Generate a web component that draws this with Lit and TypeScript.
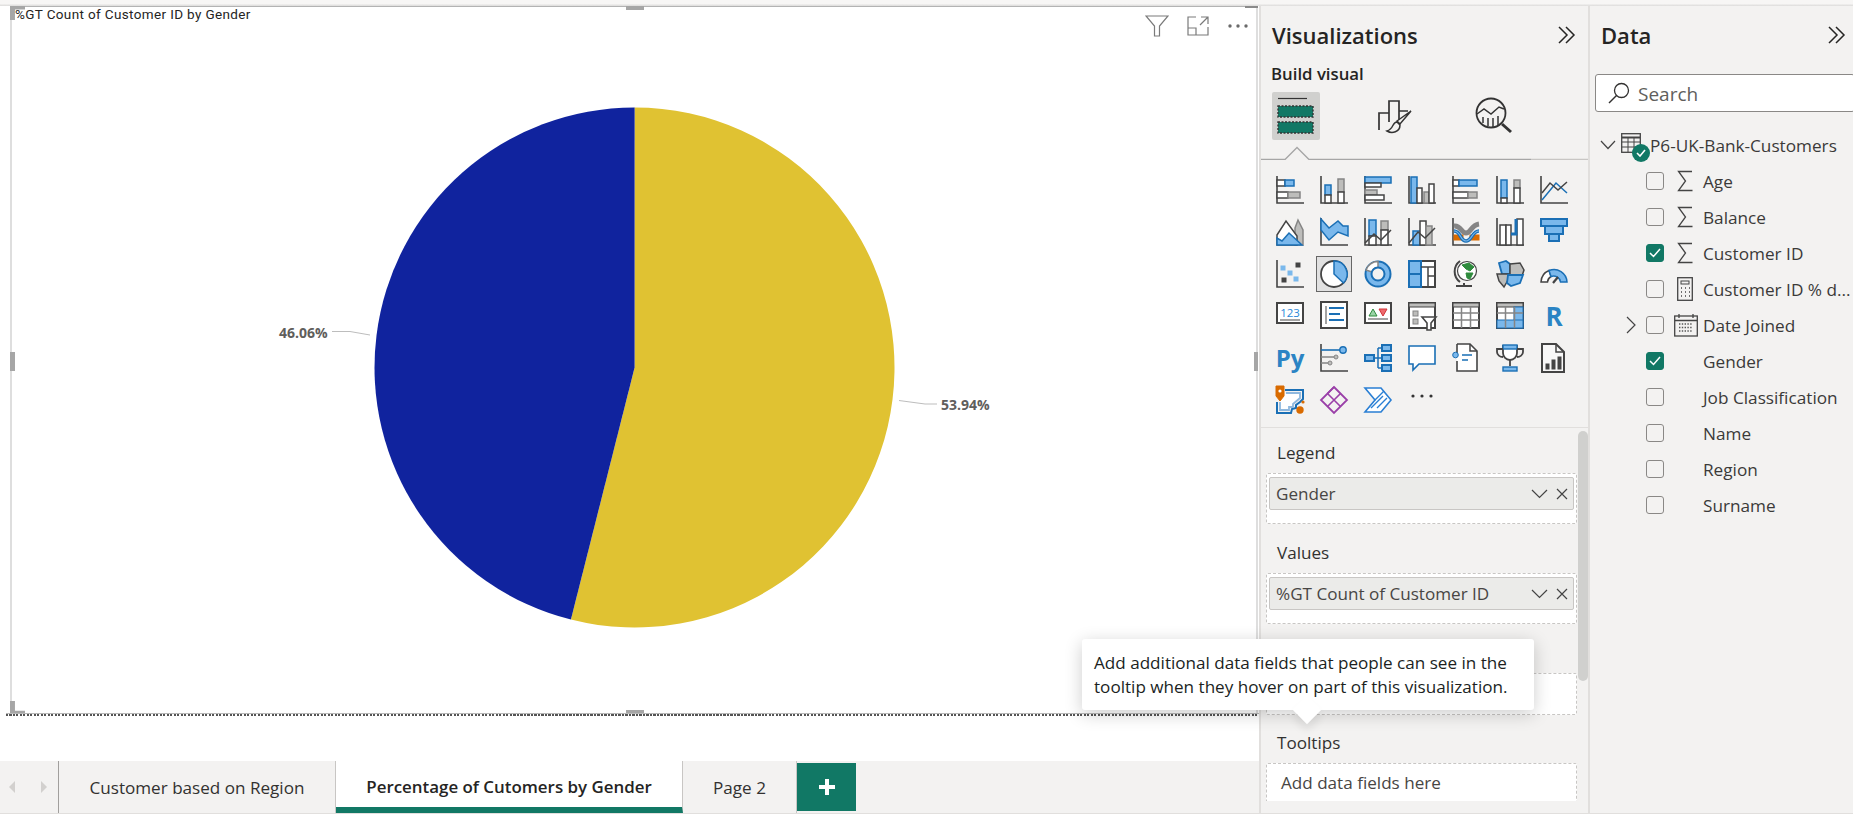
import { LitElement, html, css, svg } from 'lit';
import { customElement } from 'lit/decorators.js';

const D = '#444444';
const B = '#1a6fb5';
const F = '#7ab8ec';
const G = '#bdbdbb';
const K = '#858585';
const W = '#ffffff';
const O = '#d96b00';

const r = (x: number, y: number, w: number, h: number, fill: string, stroke: string, sw = 1.5) =>
  svg`<rect x=${x} y=${y} width=${w} height=${h} fill=${fill} stroke=${stroke} stroke-width=${sw}></rect>`;
const p = (d: string, stroke: string, fill = 'none', sw = 1.5) =>
  svg`<path d=${d} stroke=${stroke} fill=${fill} stroke-width=${sw}></path>`;
const axis = p('M1 0V27H28', D, 'none', 1.6);

const ICONS = [
  // row 1
  svg`${axis}${r(1, 4, 8, 6, W, D)}${r(9, 4, 9, 6, F, B)}${r(1, 16, 11, 6, W, D)}${r(12, 16, 12, 6, G, K)}`,
  svg`${axis}${r(5, 9, 6, 10, F, B)}${r(5, 19, 6, 8, W, D)}${r(18, 3, 6, 13, G, K)}${r(18, 16, 6, 11, W, D)}`,
  svg`${axis}${r(1, 1, 26, 6, F, B)}${r(1, 7, 16, 4, W, D)}${r(1, 14, 12, 5, G, K)}${r(1, 19, 19, 5, W, D)}`,
  svg`${axis}${r(3, 1, 6, 26, F, B)}${r(9, 12, 5, 15, W, D)}${r(16, 16, 5, 11, G, K)}${r(21, 8, 5, 19, W, D)}`,
  svg`${axis}${r(1, 4, 6, 6, W, D)}${r(7, 4, 18, 6, F, B)}${r(1, 16, 15, 6, W, D)}${r(16, 16, 9, 6, G, K)}`,
  svg`${axis}${r(5, 4, 6, 18, F, B)}${r(5, 22, 6, 5, W, D)}${r(18, 4, 6, 8, G, K)}${r(18, 12, 6, 15, W, D)}`,
  svg`${axis}${p('M2 24L16 7L27 17', B)}${p('M2 17L10 7L18 14L27 6', D)}`,
  // row 2
  svg`${p('M19 10L22 2L27 12V27H19Z', K, G)}${p('M1 17L10 3L21 18V27H1Z', D, W)}${p('M1 27V20L6 23L13 15L26 27Z', B, F)}`,
  svg`${axis}${p('M1 1L9 10L18 3L23 8H28V18L18 14L9 22L1 12Z', B, F)}`,
  svg`${axis}${r(5, 2, 7, 16, F, B)}${r(5, 18, 7, 9, W, D)}${r(17, 3, 7, 9, G, K)}${r(17, 12, 7, 15, W, D)}${p('M1 25L10 16L17 22L27 12', D)}`,
  svg`${axis}${r(5, 13, 7, 14, F, B)}${r(12, 3, 6, 24, W, D)}${r(18, 8, 6, 19, G, K)}${p('M1 25L10 14L17 20L27 10', D)}`,
  svg`${axis}${p('M2 8C9 7 9 15 14 15S19 7 27 6', K, 'none', 5)}${r(2, 17, 9, 5, O, O, 1)}${r(18, 17, 9, 5, O, O, 1)}${p('M2 13C9 13 8 23 14 23S20 13 27 13', B, 'none', 3.5)}${p('M2 13C9 13 8 23 14 23S20 13 27 13', F, 'none', 1.2)}`,
  svg`${axis}${r(4, 7, 6, 20, W, D)}${r(10, 7, 5, 20, W, D)}${r(21, 1, 6, 26, W, D)}${p('M15 16H20V1', B, 'none', 3)}`,
  svg`${r(1, 1, 26, 7, F, B, 2)}${r(5, 8, 18, 8, F, B, 2)}${r(9, 16, 10, 7, F, B, 2)}`,
  // row 3
  svg`${axis}${r(5, 6, 4, 4, F, F, 1)}${r(12, 11, 4, 4, F, F, 1)}${r(18, 17, 4, 4, F, F, 1)}${r(20, 3, 4, 4, D, D, 1)}${r(6, 18, 4, 4, D, D, 1)}`,
  svg`<circle cx="14" cy="14" r="13" fill=${W} stroke=${D} stroke-width="1.8"></circle>${p('M14 14V1A13 13 0 0 1 23.5 23Z', B, F)}`,
  svg`<circle cx="14" cy="14" r="12.5" fill=${F} stroke=${B} stroke-width="2"></circle>${p('M14 1.5A12.5 12.5 0 0 0 2 10L8 12A6.5 6.5 0 0 1 14 7.5Z', K, W)}<circle cx="14" cy="14" r="6.5" fill="#f3f2f1" stroke=${B} stroke-width="2"></circle>`,
  svg`${r(1, 1, 26, 26, W, D, 2)}${r(1, 1, 12, 13, F, B, 2)}${r(1, 14, 12, 13, F, B, 2)}${p('M13 7H27M20 7V27M20 16H27', D)}`,
  svg`<circle cx="15" cy="11" r="9.5" fill=${W} stroke=${D} stroke-width="1.2"></circle>${p('M10 5L17 3L22 7L18 11L14 9ZM14 13L21 13L18 19L15 18Z', '#2e8b3d', '#2e8b3d', 1)}${p('M8 1A13 13 0 0 0 8 22M4 26H20M12 23V26', D, 'none', 2)}`,
  svg`${p('M3 3L10 1L14 4V14L6 14Z', B, F, 1.8)}${p('M14 4L24 3L28 10L26 16H14Z', D, G, 1.5)}${p('M1 14L12 14V20L8 27L3 21Z', D, G, 1.5)}${p('M12 15H27L24 23L15 26L11 23Z', B, F, 1.8)}`,
  svg`${p('M1 22A13 13 0 0 1 9 10.5L11 16.5A7 7 0 0 0 7.5 22Z', D, W)}${p('M9 10.5A13 13 0 0 1 27 22H20.5A7 7 0 0 0 11 16.5Z', B, F)}${p('M13 23L18 17', D, 'none', 2.2)}`,
  // row 4
  svg`${r(1, 1, 26, 20, W, D, 2)}<text x="14" y="15" text-anchor="middle" font-size="11.5" fill="#2b88d8" font-family="Open Sans, sans-serif">123</text>${p('M4 18H24', K)}`,
  svg`${r(1, 0, 26, 26, W, D, 2)}${p('M6 4V22', K)}${p('M9 6H24M9 12H20M9 18H24', B, 'none', 2.2)}`,
  svg`${r(1, 1, 26, 20, W, D, 2)}${p('M5 14L9 7L13 14Z', '#2e8b3d', '#9ad3a6', 1)}${p('M15 7H23L19 14Z', '#d13438', '#ef6a6e', 1)}${p('M4 17H24', K)}`,
  svg`${r(1, 1, 26, 25, W, D, 2)}${r(1, 1, 26, 4, G, D, 1)}${r(5, 9, 5, 5, G, K, 1)}${r(5, 17, 5, 5, G, K, 1)}${p('M14 15H28L23 21V28H19V21Z', D, W, 1.6)}`,
  svg`${r(1, 1, 26, 25, W, D, 2)}${r(1, 1, 26, 4, G, D, 1)}${p('M1 11H27M1 18H27M9.5 5V26M18.5 5V26', K)}`,
  svg`${r(1, 1, 26, 25, W, D, 2)}${r(1, 1, 26, 4, G, D, 1)}${r(18, 5, 9, 21, F, B, 1)}${r(1, 18, 26, 8, F, B, 1)}${p('M1 11H27M9.5 5V26M18.5 5V26', K)}`,
  svg`<text x="14" y="24" text-anchor="middle" font-size="26" font-weight="700" fill="#2b84c4" font-family="Open Sans, sans-serif">R</text>`,
  // row 5
  svg`<text x="14" y="23" text-anchor="middle" font-size="24" font-weight="700" fill="#2b84c4" font-family="Open Sans, sans-serif">Py</text>`,
  svg`${axis}${p('M1 6H20', B, 'none', 1.6)}<circle cx="23" cy="6" r="3.2" fill=${F} stroke=${B} stroke-width="1.4"></circle>${p('M1 13H15M1 19H9', K, 'none', 1.6)}<circle cx="16" cy="13" r="2" fill=${G} stroke=${K}></circle><circle cx="10" cy="19" r="2" fill=${G} stroke=${K}></circle>`,
  svg`${r(1, 11, 9, 6, F, B, 2)}${r(18, 1, 9, 6, F, B, 2)}${r(18, 11, 9, 6, F, B, 2)}${r(18, 21, 9, 6, F, B, 2)}${p('M10 14H18M14 4V24M14 4H18M14 24H18', B)}`,
  svg`${p('M1 2H27V20H11L5 26V20H1Z', B, W, 1.6)}`,
  svg`${p('M5 0H18L25 7V27H5V17M5 9V0', D, W, 1.6)}${p('M18 0V7H25', D)}<circle cx="3.5" cy="11" r="2.8" fill=${F} stroke=${B}></circle>${p('M10 11H20M10 16H16', B)}`,
  svg`${p('M7 2H21V9A7 7 0 0 1 7 9Z', D, W, 1.8)}${r(7, 1, 14, 4, F, B, 1.4)}${p('M7 5H1V8C1 11 4 13 7 13M21 5H27V8C27 11 24 13 21 13M14 16V22', D, 'none', 1.8)}${r(7, 23, 14, 4, F, B, 1.4)}`,
  svg`${p('M2 0H16L24 8V28H2Z', D, '#f7f7f7', 2)}${p('M16 0V8H24', D)}${r(6, 20, 3, 5, D, D, 1)}${r(12, 16, 3, 9, D, D, 1)}${r(18, 13, 3, 12, D, D, 1)}`,
  // row 6
  svg`${p('M9 4H27V13L24 16L20 19V22L16 23L15 27H1V16', B, 'none', 2)}${p('M10 7H24V12L17 18V21L13 21V24H4V16', '#8fb8de', W, 1.8)}<circle cx="24" cy="24" r="3.7" fill=${O}></circle><circle cx="27" cy="16" r="1.6" fill=${O}></circle>${p('M0 0H8V10L4 15L0 10Z', O, O, 1)}<circle cx="4" cy="5" r="1.6" fill=${W}></circle>`,
  svg`${p('M14 1L27 14L14 27L1 14Z', '#9a3fa8', 'none', 1.8)}${p('M7.5 7.5L20.5 20.5M20.5 7.5L7.5 20.5M14 1L7.5 7.5M14 14L20.5 7.5', '#9a3fa8', 'none', 1.6)}`,
  svg`${p('M1 2H17L27 14L17 26H1L11 14Z', '#2a7fd4', W, 1.6)}${p('M11 14L20 5M7 22L19 10M13 22L23 12', '#2a7fd4', 'none', 1.4)}`,
  svg`<circle cx="5" cy="10" r="1.6" fill="#333"></circle><circle cx="14" cy="10" r="1.6" fill="#333"></circle><circle cx="23" cy="10" r="1.6" fill="#333"></circle>`,
];

const chevrons = html`<svg class="chev" viewBox="0 0 20 18" width="20" height="18">
  <path d="M2 1L10 9L2 17M9 1L17 9L9 17" fill="none" stroke="#252423" stroke-width="1.5"></path></svg>`;

const sigma = html`<svg viewBox="0 0 16 22" width="16" height="22"><path d="M15 1.5H1.5L8.5 11L1.5 20.5H15.5" fill="none" stroke="#444" stroke-width="1.3"></path></svg>`;
const calc = html`<svg viewBox="0 0 16 24" width="16" height="24"><rect x=".7" y=".7" width="14.6" height="22.6" fill="none" stroke="#444" stroke-width="1.3"></rect><rect x="4" y="4" width="8" height="3" fill="none" stroke="#444"></rect><path d="M4 11h1M8 11h1M12 11h1M4 15h1M8 15h1M12 15h1M4 19h1M8 19h1M12 19h1" stroke="#444" stroke-width="1.6"></path></svg>`;
const calendar = html`<svg class="cal" viewBox="0 0 24 24" width="24" height="24"><rect x=".7" y="3" width="22.6" height="20" fill="none" stroke="#444" stroke-width="1.3"></rect><path d="M1 7.5H23M5 1v4M19 1v4" stroke="#444" stroke-width="1.3"></path><path d="M5 11h14M5 14.500h14M5 18h14" stroke="#555" stroke-width="1.400" stroke-dasharray="1.400 1.400"></path></svg>`;

const FIELDS = [
  { name: 'Age', icon: sigma },
  { name: 'Balance', icon: sigma },
  { name: 'Customer ID', icon: sigma, checked: true },
  { name: 'Customer ID % d...', icon: calc },
  { name: 'Date Joined', icon: calendar, expand: true },
  { name: 'Gender', checked: true },
  { name: 'Job Classification' },
  { name: 'Name' },
  { name: 'Region' },
  { name: 'Surname' },
];

const pillIcons = html`<span class="pill-icons">
  <svg viewBox="0 0 17 10" width="17" height="10"><path d="M1 1L8.500 8.500L16 1" fill="none" stroke="#444" stroke-width="1.200"></path></svg>
  <svg viewBox="0 0 12 12" width="12" height="12"><path d="M1 1L11 11M11 1L1 11" fill="none" stroke="#444" stroke-width="1.200"></path></svg>
</span>`;

@customElement('app-root')
export class AppRoot extends LitElement {
  static styles = css`
    :host {
      display: block;
      width: 1853px;
      height: 814px;
      overflow: hidden;
      background: #f3f2f1;
      font-family: 'Open Sans', 'Liberation Sans', sans-serif;
      color: #252423;
      position: relative;
    }
    .app {
      display: grid;
      grid-template-columns: 1259px 331px 263px;
      height: 814px;
      border-bottom: 1px solid #e1dfdd;
      padding-top: 6px;
      box-sizing: border-box;
      position: relative;
    }
    .strip {
      position: absolute;
      left: 0;
      right: 0;
      top: 0;
      height: 6px;
      background: linear-gradient(#f7f6f5 60%, #dcdbda);
    }
    .report {
      display: flex;
      flex-direction: column;
      min-width: 0;
    }
    .canvas {
      height: 755px;
      background: #fff;
      position: relative;
      flex: none;
    }
    .visual {
      position: absolute;
      left: 10px;
      top: 0;
      width: 1248px;
      height: 708px;
      border-top: 1px solid #b3b3b3;
      border-left: 2px solid #dedede;
      border-right: 2px solid #dedede;
      box-sizing: border-box;
    }
    .visual::after {
      content: '';
      position: absolute;
      left: -6px;
      right: -4px;
      bottom: -2px;
      height: 3px;
      background:
        linear-gradient(#b8b8b8, #b8b8b8) top / 100% 1px no-repeat,
        repeating-linear-gradient(90deg, #555 0 2px, #fff 2px 3.5px);
    }
    .visual > svg.pie {
      display: block;
      position: absolute;
      left: -2px;
      top: -1px;
    }
    .vtitle {
      position: absolute;
      left: 3px;
      top: 0;
      font: 13.5px/15px Roboto, sans-serif;
      letter-spacing: 0.36px;
      color: #252423;
    }
    .handle {
      position: absolute;
      background: #a6a6a6;
    }
    .h-tl { left: -2px; top: -1px; width: 15px; height: 14px; clip-path: polygon(0 0, 100% 0, 100% 25%, 33% 25%, 33% 100%, 0 100%); }
    .h-t { left: 614px; top: -1px; width: 18px; height: 4px; }
    .h-l { left: -2px; top: 345px; width: 5px; height: 19px; }
    .h-r { right: -2px; top: 345px; width: 4px; height: 19px; }
    .h-b { left: 614px; bottom: 0; width: 18px; height: 4px; }
    .h-bl { left: -2px; bottom: 0; width: 15px; height: 13px; clip-path: polygon(0 0, 33% 0, 33% 75%, 100% 75%, 100% 100%, 0 100%); }
    .h-tr { right: -2px; top: -1px; width: 13px; height: 2px; background: #8a8a8a; }
    .vactions {
      position: absolute;
      top: 8px;
      right: 7px;
      display: flex;
      align-items: center;
      gap: 18px;
    }
    .tabs {
      flex: 1;
      display: flex;
      align-items: stretch;
      position: relative;
    }
    .nav {
      width: 59px;
      display: flex;
      align-items: center;
      justify-content: space-between;
      padding: 0 10px 0 8px;
      box-sizing: border-box;
      border-right: 1px solid #a19f9d;
    }
    .tab {
      display: flex;
      align-items: center;
      justify-content: center;
      font-size: 17.1px;
      box-sizing: border-box;
      border-right: 1px solid #c8c6c4;
      color: #323130;
    }
    .tab.t1 { width: 277px; }
    .tab.t2 {
      width: 347px;
      background: #fff;
      font-size: 16.9px;
      font-weight: 600;
      color: #252423;
      border-bottom: 6px solid #117865;
      padding-top: 5px;
    }
    .tab.t3 { width: 114px; }
    .add {
      width: 59px;
      background: #117865;
      margin: 2px 0;
      display: flex;
      align-items: center;
      justify-content: center;
    }
    .viz {
      border-left: 2px solid #e1dfdd;
      border-right: 2px solid #e1dfdd;
      display: flex;
      flex-direction: column;
      position: relative;
      min-width: 0;
    }
    .head {
      height: 58px;
      display: flex;
      align-items: center;
      justify-content: space-between;
      font-size: 22px;
      font-weight: 600;
    }
    .viz .head { padding: 0 11px 0 11px; }
    .build {
      margin-left: 10px;
      font-size: 16.8px;
      font-weight: 600;
      line-height: 20px;
    }
    .vtabs {
      display: grid;
      grid-template-columns: 48px 48px 48px;
      column-gap: 51px;
      margin: 8px 0 0 11px;
      height: 48px;
    }
    .vtab {
      display: flex;
      align-items: center;
      justify-content: center;
    }
    .vtab.on {
      background: #d0d0ce;
      border-radius: 2px;
    }
    .notch {
      height: 20px;
      display: block;
    }
    .grid {
      display: grid;
      grid-template-columns: repeat(7, 44px);
      grid-auto-rows: 42px;
      padding: 9px 0 0 7px;
    }
    .cell {
      display: flex;
      align-items: center;
      justify-content: center;
    }
    .cell > span {
      display: flex;
      width: 36px;
      height: 36px;
      align-items: center;
      justify-content: center;
    }
    .cell svg {
      overflow: visible;
    }
    .cell.sel > span {
      background: #e1e1e1;
      box-shadow: inset 0 0 0 1px #666;
    }
    .fields {
      margin-top: 6px;
      border-top: 1px solid #e1dfdd;
      padding-top: 13px;
      height: 374px;
      box-sizing: border-box;
      overflow: hidden;
      position: relative;
    }
    .flabel {
      font-size: 17.1px;
      line-height: 24px;
      height: 24px;
      margin: 0 0 8px 16px;
      color: #323130;
    }
    .box {
      margin: 0 10px 17px 5px;
      width: 311px;
      box-sizing: border-box;
      background: #fff;
      border: 1px dashed #c8c6c4;
      border-radius: 2px;
      font-size: 17.1px;
      color: #484644;
    }
    .box.filled {
      height: 51px;
      padding: 3px 2px 0;
    }
    .box.empty {
      height: 42px;
      line-height: 38px;
      padding-left: 14px;
      margin-bottom: 16px;
    }
    .pill {
      height: 33px;
      box-sizing: border-box;
      background: #ebebe9;
      border: 1px solid #c8c6c4;
      border-radius: 2px;
      display: flex;
      align-items: center;
      justify-content: space-between;
      padding: 0 5px 0 6px;
    }
    .pill-icons {
      display: flex;
      align-items: center;
      gap: 8px;
    }
    .scroll {
      position: absolute;
      left: 317px;
      top: 3px;
      width: 10px;
      height: 250px;
      border-radius: 5px;
      background: #d0d0ce;
    }
    .data {
      min-width: 0;
    }
    .data .head { padding: 0 6px 0 11px; }
    .search {
      margin: 10px -2px 15px 5px;
      height: 38px;
      background: #fff;
      border: 1px solid #8a8886;
      border-radius: 3px;
      box-sizing: border-box;
      display: flex;
      align-items: center;
      gap: 8px;
      padding: 2px 0 0 12px;
      font-size: 19px;
      color: #605e5c;
    }
    .search svg {
      margin-top: -2px;
    }
    .row {
      height: 36px;
      display: flex;
      align-items: center;
      font-size: 17.2px;
      color: #3b3a39;
      white-space: nowrap;
    }
    .row.root { padding-left: 10px; }
    .row.root .tbl { position: relative; width: 29px; height: 24px; margin: 0 0 0 5px; }
    .tbl > svg {
      position: absolute;
      left: 0;
      top: 0;
    }
    .badge {
      position: absolute;
      left: 11px;
      top: 11px;
      width: 18px;
      height: 18px;
      border-radius: 50%;
      background: #117865;
      display: flex;
      align-items: center;
      justify-content: center;
    }
    .row.field { padding-left: 36px; }
    .exp { width: 20px; display: flex; }
    .check {
      width: 18px;
      height: 18px;
      box-sizing: border-box;
      border: 1px solid #8a8886;
      border-radius: 3px;
      display: flex;
      align-items: center;
      justify-content: center;
      flex: none;
    }
    .check.on { background: #117865; border-color: #117865; }
    .ficon {
      width: 27px;
      margin-left: 12px;
      box-sizing: border-box;
      height: 24px;
      display: flex;
      align-items: center;
      padding-left: 1px;
      flex: none;
    }
    .cal {
      margin-left: -3px;
    }
    .tooltip {
      position: absolute;
      left: 1082px;
      top: 639px;
      width: 452px;
      height: 71px;
      box-sizing: border-box;
      padding: 12px;
      background: #fff;
      border-radius: 3px;
      box-shadow: 0 4px 18px rgba(0, 0, 0, 0.2);
      font-size: 17.1px;
      line-height: 24px;
      color: #201f1e;
      white-space: nowrap;
      z-index: 1;
    }
    .tooltip::after {
      content: '';
      position: absolute;
      left: 215px;
      bottom: -10px;
      width: 20px;
      height: 20px;
      background: #fff;
      transform: rotate(45deg);
      box-shadow: 5px 5px 8px rgba(0, 0, 0, 0.08);
      z-index: -1;
    }
  `;

  render() {
    return html`
      <div class="app">
        <div class="strip"></div>
        <div class="report">
          <div class="canvas">
            <div class="visual">
              <svg class="pie" width="1248" height="708" viewBox="10 6 1248 708">
                <path d="M634.600 367.500V107.500A260 260 0 1 1 570.900 619.600Z" fill="#e0c232"></path>
                <path d="M634.600 367.500L570.900 619.600A260 260 0 0 1 634.600 107.500Z" fill="#10239e"></path>
                <path d="M332 331.500H350L370 335" fill="none" stroke="#bdbdbd"></path>
                <path d="M899 400.500L925 404H937" fill="none" stroke="#bdbdbd"></path>
                <text x="279" y="338" font-family="Open Sans, sans-serif" font-size="14" font-weight="700" fill="#605e5c">46.06%</text>
                <text x="941" y="410" font-family="Open Sans, sans-serif" font-size="14" font-weight="700" fill="#605e5c">53.94%</text>
              </svg>
              <div class="handle h-tl"></div>
              <div class="handle h-t"></div>
              <div class="handle h-l"></div>
              <div class="handle h-r"></div>
              <div class="handle h-b"></div>
              <div class="handle h-bl"></div>
              <div class="handle h-tr"></div>
              <div class="vtitle">%GT Count of Customer ID by Gender</div>
              <div class="vactions">
                <svg viewBox="0 0 24 22" width="24" height="22"><path d="M1 1H23L14.500 11V21H9.500V11Z" fill="none" stroke="#7a7a7a" stroke-width="1.200"></path></svg>
                <svg viewBox="0 0 22 20" width="22" height="20"><path d="M9 1H1V19H21V11M1 12H9V19M13 9L21 1M14 1H21V8" fill="none" stroke="#7a7a7a" stroke-width="1.200"></path></svg>
                <svg viewBox="0 0 22 6" width="22" height="6"><circle cx="3" cy="3" r="1.700" fill="#6a6a6a"></circle><circle cx="11" cy="3" r="1.700" fill="#6a6a6a"></circle><circle cx="19" cy="3" r="1.700" fill="#6a6a6a"></circle></svg>
              </div>
            </div>
          </div>
          <div class="tabs">
            <div class="nav">
              <svg viewBox="0 0 8 14" width="8" height="14"><path d="M7 1L1 7L7 13Z" fill="#d2d0ce"></path></svg>
              <svg viewBox="0 0 8 14" width="8" height="14"><path d="M1 1L7 7L1 13Z" fill="#d2d0ce"></path></svg>
            </div>
            <div class="tab t1">Customer based on Region</div>
            <div class="tab t2">Percentage of Cutomers by Gender</div>
            <div class="tab t3">Page 2</div>
            <div class="add">
              <svg viewBox="0 0 18 18" width="18" height="18"><path d="M9 1V17M1 9H17" stroke="#fff" stroke-width="4"></path></svg>
            </div>
          </div>
        </div>

        <div class="viz">
          <div class="head"><span>Visualizations</span>${chevrons}</div>
          <div class="build">Build visual</div>
          <div class="vtabs">
            <div class="vtab on">
              <svg viewBox="0 0 38 38" width="38" height="38">
                <path d="M1 1.500H30" stroke="#333" stroke-width="1.200"></path>
                <rect x="1" y="9" width="35" height="11" fill="#117865" stroke="#333" stroke-width="1.400" stroke-dasharray="2 1.500"></rect>
                <rect x="1" y="25" width="35" height="11" fill="#117865" stroke="#333" stroke-width="1.400" stroke-dasharray="2 1.500"></rect>
              </svg>
            </div>
            <div class="vtab">
              <svg viewBox="0 0 36 36" width="36" height="36">
                <path d="M2 32V15H12V3H22V13H31M22 13V22M12 15V24" fill="none" stroke="#333" stroke-width="1.700"></path>
                <path d="M34 13L23 26L20 23Z" fill="#f3f2f1" stroke="#333" stroke-width="1.500"></path>
                <path d="M20 24C15 24 17 31 10 33C15 36 23 34 23 27Z" fill="#f3f2f1" stroke="#333" stroke-width="1.500"></path>
              </svg>
            </div>
            <div class="vtab">
              <svg viewBox="0 0 38 38" width="38" height="38">
                <circle cx="16" cy="16" r="14.500" fill="none" stroke="#333" stroke-width="1.800"></circle>
                <path d="M27 27L36 35" stroke="#333" stroke-width="3"></path>
                <path d="M2 17L9 12L16 17L24 10L29 12" fill="none" stroke="#333" stroke-width="1.500"></path>
                <path d="M8 20V26M13 21V29M18 21V30M23 19V28" stroke="#333" stroke-width="1.500"></path>
              </svg>
            </div>
          </div>
          <svg class="notch" width="327" height="20" viewBox="0 0 327 20">
            <path d="M0 19.500H24L36 7.500L48 19.500H270" fill="none" stroke="#a6a6a6" stroke-width="1.400"></path>
            <path d="M270 19.500H327" stroke="#c8c6c4" stroke-width="1.400"></path>
          </svg>
          <div class="grid">
            ${ICONS.map(
              (icon, i) => html`<div class="cell ${i === 15 ? 'sel' : ''}"><span><svg viewBox="0 0 28 28" width="28" height="28">${icon}</svg></span></div>`,
            )}
          </div>
          <div class="fields">
            <div class="flabel">Legend</div>
            <div class="box filled"><div class="pill"><span>Gender</span>${pillIcons}</div></div>
            <div class="flabel">Values</div>
            <div class="box filled"><div class="pill"><span>%GT Count of Customer ID</span>${pillIcons}</div></div>
            <div class="flabel"></div>
            <div class="box empty"></div>
            <div class="flabel">Tooltips</div>
            <div class="box empty">Add data fields here</div>
            <div class="scroll"></div>
          </div>
        </div>

        <div class="data">
          <div class="head"><span>Data</span>${chevrons}</div>
          <div class="search">
            <svg viewBox="0 0 22 22" width="22" height="22"><circle cx="13.500" cy="8.500" r="7" fill="none" stroke="#323130" stroke-width="1.300"></circle><path d="M8.500 13.500L1 21" stroke="#323130" stroke-width="1.500"></path></svg>
            <span>Search</span>
          </div>
          <div class="row root">
            <svg viewBox="0 0 16 10" width="16" height="10"><path d="M1 1L8 8.500L15 1" fill="none" stroke="#444" stroke-width="1.200"></path></svg>
            <div class="tbl">
              <svg viewBox="0 0 20 20" width="20" height="20"><rect x=".7" y=".7" width="18.600" height="18.600" fill="none" stroke="#444" stroke-width="1.300"></rect><path d="M1 4.500H19" stroke="#444" stroke-width="2"></path><path d="M1 9H19M1 14H19M7 5V19M13 5V19" stroke="#444"></path></svg>
              <div class="badge"><svg viewBox="0 0 10 8" width="10" height="8"><path d="M1 4L4 7L9 1" fill="none" stroke="#fff" stroke-width="1.600"></path></svg></div>
            </div>
            <span>P6-UK-Bank-Customers</span>
          </div>
          ${FIELDS.map(
            (f) => html`<div class="row field">
              <span class="exp">${f.expand
                ? html`<svg viewBox="0 0 10 18" width="10" height="18"><path d="M1 1L9 9L1 17" fill="none" stroke="#444" stroke-width="1.200"></path></svg>`
                : ''}</span>
              <span class="check ${f.checked ? 'on' : ''}">${f.checked
                ? html`<svg viewBox="0 0 12 10" width="12" height="10"><path d="M1 5L4.500 8.500L11 1" fill="none" stroke="#fff" stroke-width="1.500"></path></svg>`
                : ''}</span>
              <span class="ficon">${f.icon ?? ''}</span>
              <span>${f.name}</span>
            </div>`,
          )}
        </div>

        <div class="tooltip">Add additional data fields that people can see in the<br />tooltip when they hover on part of this visualization.</div>
      </div>
    `;
  }
}
